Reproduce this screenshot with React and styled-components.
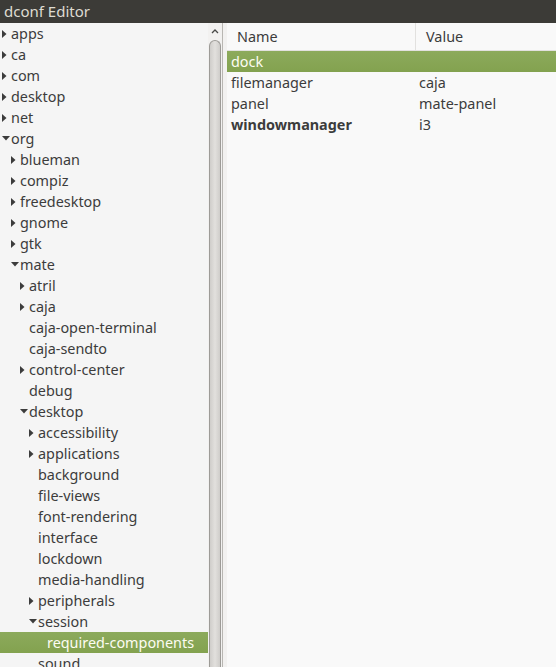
import React from "react";
import styled, { createGlobalStyle } from "styled-components";

const Global = createGlobalStyle`
  html, body { margin: 0; padding: 0; background: #f2f1f0; }
  body { font-family: "Noto Sans", "Open Sans", sans-serif; }
  #root { width: 556px; height: 667px; overflow: hidden; }
`;

const Window = styled.div`
  width: 556px;
  height: 667px;
  display: flex;
  flex-direction: column;
  overflow: hidden;
  background: #f2f1f0;
`;

const TitleBar = styled.div`
  height: 23px;
  flex: none;
  background: #3c3b37;
  color: #dfdbd2;
  font-size: 15px;
  line-height: 23px;
  padding-left: 4px;
`;

const Body = styled.div`
  flex: 1;
  display: flex;
  min-height: 0;
`;

const TreePane = styled.div`
  width: 208px;
  flex: none;
  background: #f5f5f5;
  overflow: hidden;
`;

const ScrollBar = styled.div`
  width: 14px;
  flex: none;
  background: #f2f1f0;
  border-right: 1px solid #b8b6b2;
  display: flex;
  flex-direction: column;
  align-items: center;
`;

const ScrollArrow = styled.div`
  height: 17px;
  display: flex;
  align-items: center;
  justify-content: center;
`;

const Thumb = styled.div`
  flex: 1;
  width: 10px;
  border: 1px solid #9d9b97;
  border-bottom: none;
  border-radius: 6px 6px 0 0;
  background: linear-gradient(to right, #cfcdca, #e2e0dd 50%, #cfcdca);
`;

const Handle = styled.div`
  width: 4px;
  flex: none;
  background: #f2f1f0;
`;

const ListPane = styled.div`
  flex: 1;
  background: #f9f9f9;
  display: flex;
  flex-direction: column;
`;

const Header = styled.div`
  height: 27px;
  display: grid;
  grid-template-columns: 189px 1fr;
  border-bottom: 1px solid #e2e1df;
  background: #f9f9f9;
`;

const HeadCell = styled.div`
  font-size: 14.4px;
  color: #3c3c3c;
  line-height: 27px;
  padding-left: ${(p) => p.$pad}px;
  border-right: ${(p) => (p.$sep ? "1px solid #e2e1df" : "none")};
`;

const ListRow = styled.div`
  height: 21px;
  display: grid;
  grid-template-columns: 189px 1fr;
  font-size: 14.4px;
  line-height: 21px;
  color: ${(p) => (p.$sel ? "#fdfcf3" : "#3c3c3c")};
  background: ${(p) => (p.$sel ? "linear-gradient(#8caa5c, #83a24f)" : "transparent")};
`;

const Cell = styled.div`
  padding-left: ${(p) => p.$pad}px;
  white-space: nowrap;
  font-weight: ${(p) => (p.$bold ? 700 : 400)};
`;

const TreeRow = styled.div`
  height: 21px;
  display: flex;
  align-items: center;
  padding-left: ${(p) => p.$level * 9 + 2}px;
  font-size: 14.4px;
  color: ${(p) => (p.$sel ? "#fdfcf3" : "#3c3c3c")};
  background: ${(p) => (p.$sel ? "linear-gradient(#8caa5c, #83a24f)" : "transparent")};
  white-space: nowrap;
`;

const Expander = styled.span`
  width: 9px;
  flex: none;
  display: flex;
  align-items: center;
  justify-content: flex-start;
`;

const Label = styled.span`
  line-height: 21px;
`;

const Arrow = ({ open }) =>
  open ? (
    <svg width="8" height="5" viewBox="0 0 8 5">
      <polygon points="0,0 8,0 4,4.5" fill="#3c3c3c" />
    </svg>
  ) : (
    <svg width="5" height="8" viewBox="0 0 5 8">
      <polygon points="0,0 4.5,4 0,8" fill="#3c3c3c" />
    </svg>
  );

const tree = [
  ["apps", 0, "c"],
  ["ca", 0, "c"],
  ["com", 0, "c"],
  ["desktop", 0, "c"],
  ["net", 0, "c"],
  ["org", 0, "o"],
  ["blueman", 1, "c"],
  ["compiz", 1, "c"],
  ["freedesktop", 1, "c"],
  ["gnome", 1, "c"],
  ["gtk", 1, "c"],
  ["mate", 1, "o"],
  ["atril", 2, "c"],
  ["caja", 2, "c"],
  ["caja-open-terminal", 2, ""],
  ["caja-sendto", 2, ""],
  ["control-center", 2, "c"],
  ["debug", 2, ""],
  ["desktop", 2, "o"],
  ["accessibility", 3, "c"],
  ["applications", 3, "c"],
  ["background", 3, ""],
  ["file-views", 3, ""],
  ["font-rendering", 3, ""],
  ["interface", 3, ""],
  ["lockdown", 3, ""],
  ["media-handling", 3, ""],
  ["peripherals", 3, "c"],
  ["session", 3, "o"],
  ["required-components", 4, "", true],
  ["sound", 3, ""],
];

const rows = [
  ["dock", "", false, true],
  ["filemanager", "caja"],
  ["panel", "mate-panel"],
  ["windowmanager", "i3", true],
];

export default function App() {
  return (
    <Window>
      <Global />
      <TitleBar>dconf Editor</TitleBar>
      <Body>
        <TreePane>
          {tree.map(([name, level, exp, sel], i) => (
            <TreeRow key={i} $level={level} $sel={sel}>
              <Expander>{exp && <Arrow open={exp === "o"} />}</Expander>
              <Label>{name}</Label>
            </TreeRow>
          ))}
        </TreePane>
        <ScrollBar>
          <ScrollArrow>
            <svg width="8" height="5" viewBox="0 0 8 5">
              <polyline points="1,4 4,1 7,4" fill="none" stroke="#4a4a48" strokeWidth="1.3" />
            </svg>
          </ScrollArrow>
          <Thumb />
        </ScrollBar>
        <Handle />
        <ListPane>
          <Header>
            <HeadCell $pad={10} $sep>Name</HeadCell>
            <HeadCell $pad={10}>Value</HeadCell>
          </Header>
          {rows.map(([k, v, bold, sel], i) => (
            <ListRow key={i} $sel={sel}>
              <Cell $pad={4} $bold={bold}>{k}</Cell>
              <Cell $pad={3}>{v}</Cell>
            </ListRow>
          ))}
        </ListPane>
      </Body>
    </Window>
  );
}
